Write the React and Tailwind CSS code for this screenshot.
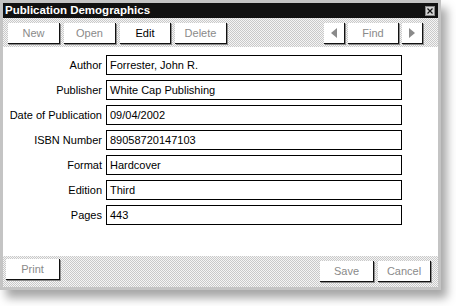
import React from 'react';

const checker =
  'bg-[repeating-conic-gradient(#c9c9c9_0_25%,#f5f5f5_0_50%)] bg-[length:2px_2px]';

const fields = [
  { label: 'Author', value: 'Forrester, John R.' },
  { label: 'Publisher', value: 'White Cap Publishing' },
  { label: 'Date of Publication', value: '09/04/2002' },
  { label: 'ISBN Number', value: '89058720147103' },
  { label: 'Format', value: 'Hardcover' },
  { label: 'Edition', value: 'Third' },
  { label: 'Pages', value: '443' },
];

const Btn = ({ children, enabled, className = '' }) => (
  <div
    className={`h-[21px] flex items-center justify-center bg-white border-r border-b border-[#111] shadow-[1px_1px_0_#8c8c8c] ${
      enabled ? 'text-black' : 'text-[#8a8a8a]'
    } ${className}`}
  >
    {children}
  </div>
);

const Arrow = ({ dir }) => (
  <svg width="6" height="10" viewBox="0 0 6 10">
    {dir === 'left' ? (
      <polygon points="6,0 6,10 0,5" fill="#8a8a8a" />
    ) : (
      <polygon points="0,0 0,10 6,5" fill="#8a8a8a" />
    )}
  </svg>
);

export default function App() {
  return (
    <div className="w-[456px] h-[306px] bg-white font-['Liberation_Sans',Arial,sans-serif] text-[11px]">
      <div className="w-[441px] h-[290px] flex flex-col border-[3px] border-[#c4c4c4] shadow-[6px_8px_9px_rgba(0,0,0,0.35)]">
        {/* title bar */}
        <div className="h-[15px] bg-[#111] flex items-center justify-between pl-[2px] pr-[3px]">
          <span className="text-white font-bold text-[11.5px] leading-none">Publication Demographics</span>
          <div className="w-[10px] h-[10px] bg-[#d4d4d4] border border-[#888] flex items-center justify-center">
            <svg width="6" height="6" viewBox="0 0 6 6">
              <path d="M0.5 0.5L5.5 5.5M5.5 0.5L0.5 5.5" stroke="#111" strokeWidth="1.2" />
            </svg>
          </div>
        </div>

        {/* toolbar */}
        <div className={`h-[29px] flex items-start pt-[5px] pl-[5px] pr-[15px] ${checker}`}>
          <div className="flex gap-[4px]">
            <Btn className="w-[52px]">New</Btn>
            <Btn className="w-[52px]">Open</Btn>
            <Btn className="w-[51px]" enabled>Edit</Btn>
            <Btn className="w-[52px]">Delete</Btn>
          </div>
          <div className="flex gap-[3px] ml-auto">
            <Btn className="w-[21px]"><Arrow dir="left" /></Btn>
            <Btn className="w-[51px]">Find</Btn>
            <Btn className="w-[21px]"><Arrow dir="right" /></Btn>
          </div>
        </div>

        {/* form */}
        <div className="flex-1 bg-white pt-[8px] flex flex-col gap-[5px]">
          {fields.map((f) => (
            <div key={f.label} className="flex items-center">
              <div className="w-[103px] text-right pr-[4px] text-black">{f.label}</div>
              <div className="w-[296px] h-[20px] border border-black flex items-center pl-[3px] text-black">
                {f.value}
              </div>
            </div>
          ))}
        </div>

        {/* footer */}
        <div className={`h-[31px] flex items-start pt-[3px] pl-[3px] pr-[7px] ${checker}`}>
          <Btn className="w-[54px]">Print</Btn>
          <div className="flex gap-[4px] ml-auto pt-[2px]">
            <Btn className="w-[54px]">Save</Btn>
            <Btn className="w-[53px]">Cancel</Btn>
          </div>
        </div>
      </div>
    </div>
  );
}
